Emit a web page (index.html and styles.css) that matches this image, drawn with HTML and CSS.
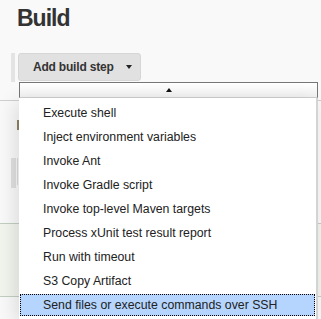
FILE: index.html
```html
<!DOCTYPE html>
<html lang="en">
<head>
    <meta charset="UTF-8">
    <link rel="stylesheet" href="styles.css">
</head>
<body>

<!-- Sección de build -->
<div class="section-build">
    <h1 class="section-title">Build</h1>
    <div class="step-row">
        <span class="step-bar"></span>
        <button class="button">Add build step <span class="caret-down"></span></button>
    </div>

    <!-- Contenido de fondo (tapado por el menú) -->
    <div class="behind">
        <div class="divider"></div>
        <div class="sliver"></div>
        <div class="field-stub"><span class="stub-box"></span><span class="stub-line"></span></div>
        <div class="green-block"></div>
    </div>

    <!-- Menú desplegable -->
    <div class="menu">
        <div class="menu-header"><span class="caret-up"></span></div>
        <ul class="menu-list">
            <li class="menu-item">Execute shell</li>
            <li class="menu-item">Inject environment variables</li>
            <li class="menu-item">Invoke Ant</li>
            <li class="menu-item">Invoke Gradle script</li>
            <li class="menu-item">Invoke top-level Maven targets</li>
            <li class="menu-item">Process xUnit test result report</li>
            <li class="menu-item">Run with timeout</li>
            <li class="menu-item">S3 Copy Artifact</li>
            <li class="menu-item selected">Send files or execute commands over SSH</li>
        </ul>
    </div>
</div>

</body>
</html>
```

FILE: styles.css
```css
/* Estilos generales */
body {
    margin: 0;
    background-color: #f9f9f9;
    font-family: "Liberation Sans", Arial, sans-serif;
    color: #333;
    overflow: hidden;
}

.section-build {
    position: relative;
    height: 319px;
}

.section-title {
    margin: 0;
    padding: 4px 0 0 17px;
    font-size: 23px;
    line-height: 28px;
    font-weight: bold;
    letter-spacing: -1px;
    color: #333;
}

/* Botón */
.step-row {
    display: flex;
    gap: 3px;
    margin-top: 21px;
    padding-left: 11px;
}

.step-bar {
    width: 4px;
    height: 29px;
    background-color: #e4e4e4;
}

.button {
    display: flex;
    align-items: center;
    gap: 12px;
    width: 123px;
    height: 28px;
    padding: 0 0 0 14px;
    box-sizing: border-box;
    white-space: nowrap;
    background-color: #e1e1e1;
    border: 1px solid #d6d6d6;
    border-radius: 3px;
    font-family: inherit;
    font-size: 12px;
    font-weight: bold;
    letter-spacing: -0.2px;
    color: #333;
}

.caret-down {
    width: 0;
    height: 0;
    border-left: 3.5px solid transparent;
    border-right: 3.5px solid transparent;
    border-top: 4px solid #222;
}

/* Contenido de fondo */
.behind {
    display: flex;
    flex-direction: column;
}

.divider {
    margin-top: 18px;
    height: 1px;
    background-color: #cfcfcf;
}

.sliver {
    margin: 19px 0 0 17px;
    width: 2px;
    height: 10px;
    background-color: #8f8566;
}

.field-stub {
    display: flex;
    gap: 1px;
    margin: 28px 0 0 11px;
    height: 30px;
}

.stub-box {
    width: 5px;
    background-color: #e0e0e0;
}

.stub-line {
    width: 1px;
    height: 27px;
    background-color: #dcdcdc;
}

.green-block {
    margin-top: 35px;
    height: 72px;
    background-color: #f2f5ee;
    border-top: 1px solid #c3cfc3;
    border-bottom: 1px solid #c3cfc3;
}

/* Menú desplegable */
.menu {
    position: absolute;
    top: 82px;
    left: 19px;
    width: 299px;
}

.menu-header {
    display: flex;
    justify-content: center;
    align-items: center;
    height: 16px;
    box-sizing: border-box;
    background: linear-gradient(#ffffff, #f1f1f1);
    border: 1px solid #777;
    border-bottom-color: #cfcfcf;
}

.caret-up {
    width: 0;
    height: 0;
    border-left: 3.5px solid transparent;
    border-right: 3.5px solid transparent;
    border-bottom: 4px solid #111;
}

.menu-list {
    display: flex;
    flex-direction: column;
    gap: 2px;
    list-style: none;
    margin: 0;
    padding: 4px 0 3px;
    width: 299px;
    box-sizing: border-box;
    background-color: white;
    border-right: 2px solid #d4d4d4;
    box-shadow: -4px 4px 18px rgba(0, 0, 0, 0.12);
}

.menu-item {
    margin: 0 1px;
    height: 22px;
    padding-left: 22px;
    font-size: 12.3px;
    line-height: 21px;
    color: #222;
    border: 1px dotted transparent;
    box-sizing: border-box;
}

.menu-item.selected {
    background-color: #b5d5fe;
    border-color: #000;
}
```
